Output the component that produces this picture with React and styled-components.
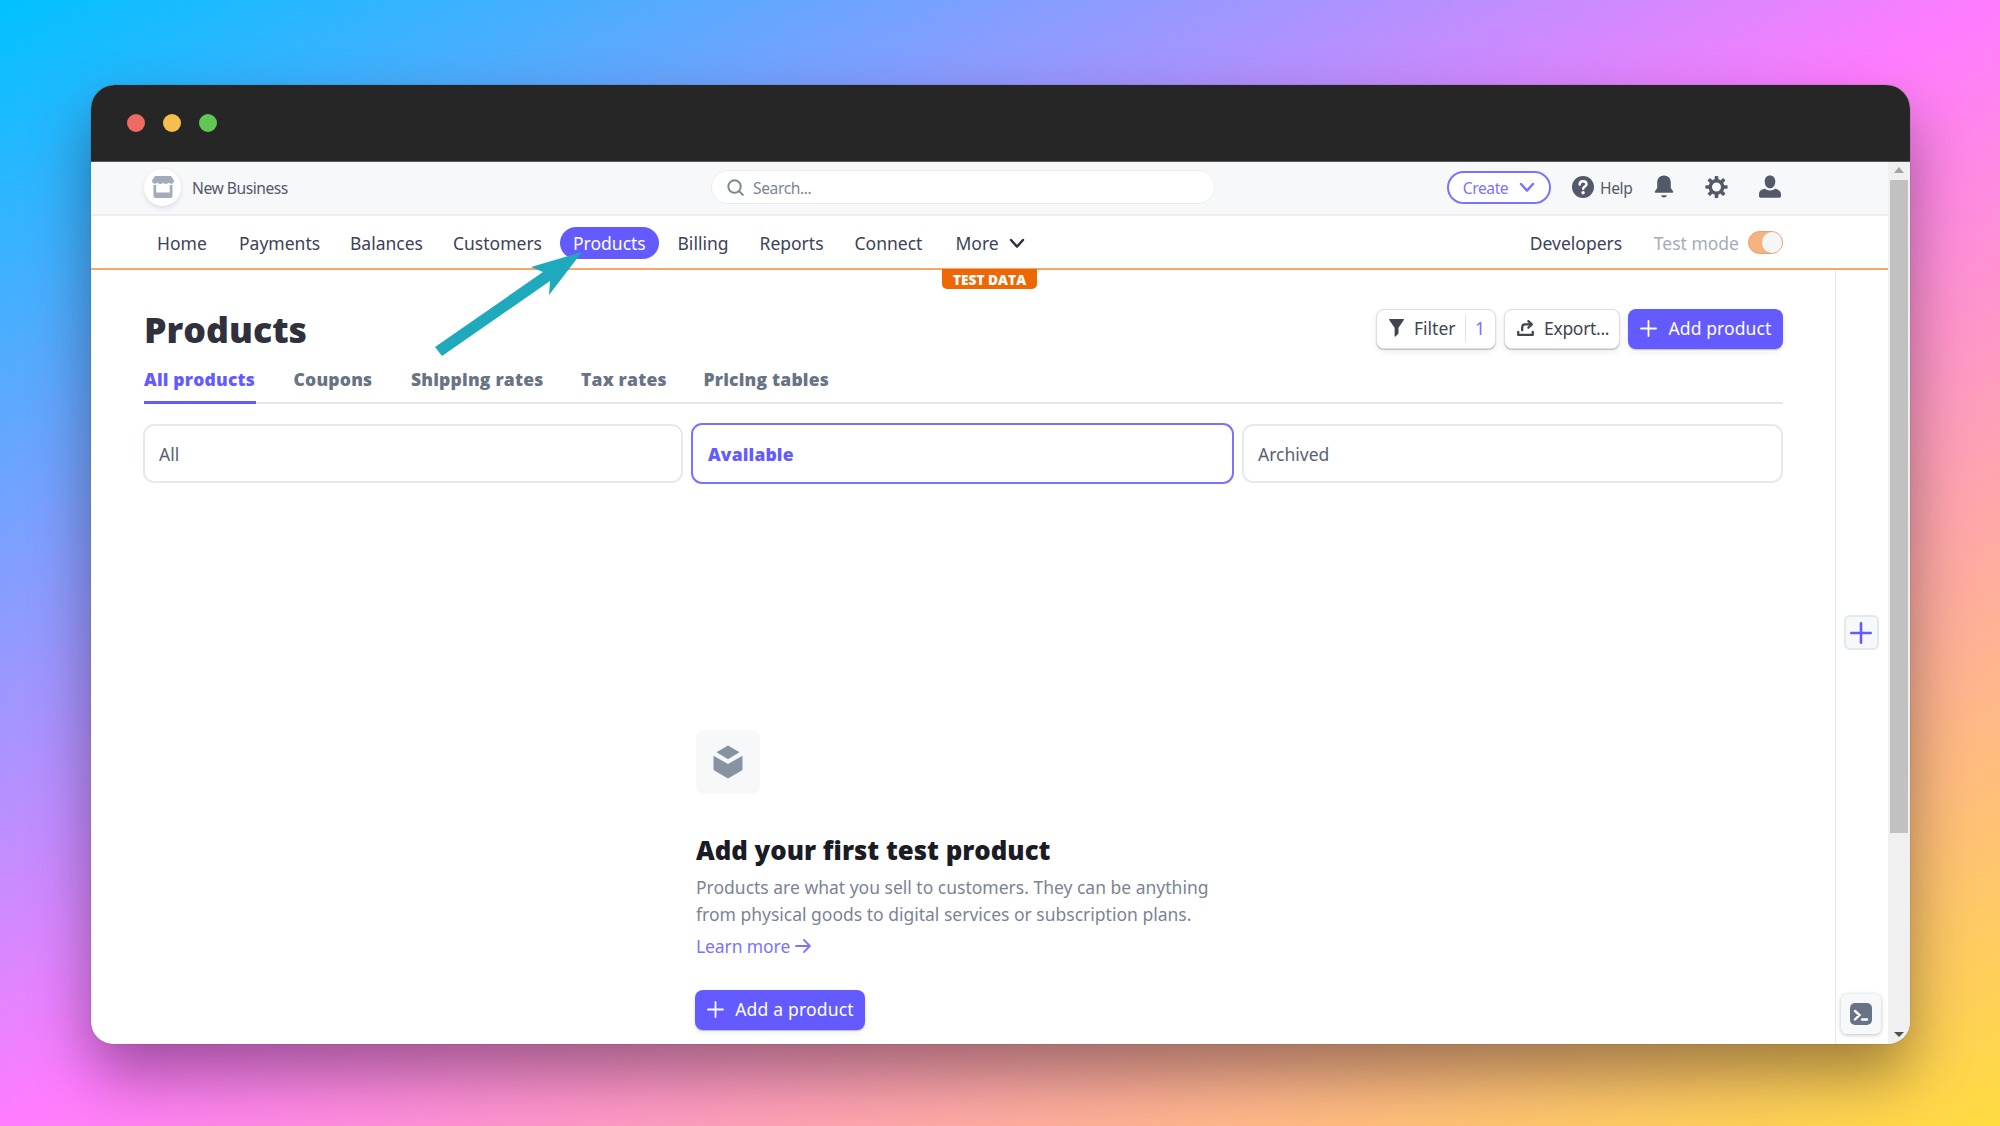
import React from "react";
import styled, { createGlobalStyle, css } from "styled-components";

const Global = createGlobalStyle`
  * { box-sizing: border-box; }
  body { margin: 0; }
`;

const heavy = css`
  font-family: "Open Sans", "Noto Sans", sans-serif;
  font-weight: 800;
`;

const Stage = styled.div`
  width: 2000px;
  height: 1126px;
  padding: 85px 90px 82px 91px;
  overflow: hidden;
  background: linear-gradient(to bottom right, #00c2ff 0%, #ff7cff 50%, #ffdc40 100%);
  font-family: "Noto Sans", "Open Sans", sans-serif;
  font-size: 17.5px;
  color: #3c4257;
  white-space: nowrap;
`;

const Window = styled.div`
  height: 959px;
  border-radius: 24px 24px 22px 22px;
  overflow: hidden;
  display: flex;
  flex-direction: column;
  background: #fff;
  box-shadow: 0 0 1px rgba(0, 0, 0, 0.6), 0 30px 60px rgba(0, 0, 0, 0.38);
`;

const TitleBar = styled.div`
  flex: none;
  height: 77px;
  padding: 0 35.5px;
  display: flex;
  align-items: center;
  gap: 18px;
  background: #262626;
  border-bottom: 1px solid #555;
`;

const Light = styled.span`
  width: 18px;
  height: 18px;
  border-radius: 50%;
  background: ${(p) => p.$color};
`;

const Viewport = styled.div`
  flex: 1;
  min-height: 0;
  display: flex;
`;

const Page = styled.div`
  flex: 1;
  display: flex;
  flex-direction: column;
`;

const Label = styled.span`
  display: inline-block;
  flex: none;
  width: ${(p) => p.$w}px;
  letter-spacing: ${(p) => (p.$ls === undefined ? "inherit" : `${p.$ls}px`)};
`;

const TopBar = styled.header`
  flex: none;
  height: 54px;
  padding: 0 107px 2px 53px;
  display: flex;
  align-items: center;
  background: #f6f8fa;
  border-bottom: 2px solid #ebeef2;
  font-size: 15.6px;
  letter-spacing: -0.4px;
  color: #545969;
`;

const Avatar = styled.span`
  width: 37px;
  height: 37px;
  margin-right: 11px;
  border-radius: 50%;
  display: grid;
  place-items: center;
  background: #fff;
  box-shadow: 0 2px 5px rgba(60, 66, 87, 0.14);
`;

const Caption = styled.span`
  padding-top: 2px;
`;

const Search = styled.div`
  width: 504px;
  height: 34px;
  margin-left: 422px;
  padding-left: 15px;
  border: 1px solid #ebeef1;
  border-radius: 17px;
  display: flex;
  align-items: center;
  gap: 9px;
  background: #fff;
  color: #7c8594;
`;

const CreateButton = styled.button`
  width: 104px;
  height: 33px;
  margin-left: 232px;
  padding: 0 0 0 13px;
  border: 2px solid #7a73ff;
  border-radius: 17px;
  display: flex;
  align-items: center;
  gap: 10px;
  background: #fff;
  color: #7a73ff;
  font: inherit;
  letter-spacing: inherit;
`;

const HelpLink = styled.span`
  margin-left: 21px;
  display: flex;
  align-items: center;
  gap: 6px;
  color: #545969;
`;

const IconRow = styled.div`
  margin-left: auto;
  display: flex;
  align-items: center;
  gap: 31px;
`;

const Nav = styled.nav`
  flex: none;
  height: 54px;
  padding: 2px 105px 0 66px;
  display: flex;
  align-items: center;
  border-bottom: 2px solid #f7a668;
  background: #fff;
`;

const NavItem = styled.a`
  height: 32px;
  line-height: 32px;
  margin-right: ${(p) => p.$gap}px;
  ${(p) =>
    p.$active &&
    css`
      padding: 0 13px;
      margin-left: -12px;
      border-radius: 16px;
      background: #635bff;
      color: #fff;
    `}
  ${(p) =>
    p.$muted &&
    css`
      color: #a3acba;
    `}
`;

const Spacer = styled.span`
  flex: 1;
`;

const Toggle = styled.span`
  width: 35px;
  height: 23px;
  margin: 0 0 1px 9px;
  border-radius: 12px;
  border: 1px solid #dfa378;
  display: flex;
  justify-content: flex-end;
  background: #f7b27f;

  &::after {
    content: "";
    width: 20px;
    height: 21px;
    border-radius: 50%;
    background: #f5f6f8;
  }
`;

const Columns = styled.div`
  flex: 1;
  min-height: 0;
  display: flex;
  position: relative;
`;

const TestData = styled.span`
  position: absolute;
  left: 851px;
  top: -1px;
  width: 95px;
  height: 20px;
  border-radius: 0 0 5px 5px;
  background: #ed6704;
  color: #fff;
  ${heavy}
  font-size: 13.7px;
  line-height: 21px;
  text-align: center;
`;

const Main = styled.main`
  width: 1745px;
  padding: 39px 52px 0 52px;
  display: flex;
  flex-direction: column;
  border-right: 1px solid #e3e7ec;
`;

const Heading = styled.div`
  height: 39px;
  display: flex;
  align-items: center;
`;

const Title = styled.h1`
  margin: 0 auto 0 1px;
  ${heavy}
  font-size: 35.7px;
  line-height: 40px;
  color: #30313d;
`;

const Button = styled.button`
  width: ${(p) => p.$w}px;
  height: 40px;
  margin-left: ${(p) => p.$ml ?? 8}px;
  padding: 0 0 1px 12px;
  border: ${(p) => (p.$primary ? "0" : "1px solid #dcdfe4")};
  border-radius: 8px;
  display: flex;
  align-items: center;
  gap: 10px;
  background: ${(p) => (p.$primary ? "#635bff" : "#fff")};
  color: ${(p) => (p.$primary ? "#fff" : "#414552")};
  box-shadow: 0 1px 1px rgba(0, 0, 0, 0.22), 0 3px 6px rgba(60, 66, 87, 0.09);
  font: inherit;
`;

const FilterCount = styled.span`
  height: 27px;
  padding-left: 9px;
  border-left: 1px solid #dfe3e8;
  line-height: 27px;
  color: #7a73ff;
`;

const Tabs = styled.div`
  height: 56px;
  margin: 0 0 0 1px;
  padding-top: 15px;
  display: flex;
  gap: 37.5px;
  border-bottom: 2px solid #e3e7ec;
  ${heavy}
  font-size: 17.5px;
  letter-spacing: 0.2px;
  color: #687385;
`;

const Tab = styled.a`
  height: 41px;
  line-height: 33px;
  ${(p) =>
    p.$active &&
    css`
      color: #635bff;
      border-bottom: 3px solid #635bff;
    `}
`;

const Segments = styled.div`
  margin-top: 19px;
  height: 61px;
  display: grid;
  grid-template-columns: 540px 543px 541px;
  gap: 8px;
  align-items: center;
`;

const Segment = styled.div`
  height: ${(p) => (p.$active ? 61 : 59)}px;
  padding: 0 14px;
  border: 2px solid ${(p) => (p.$active ? "#7a73ff" : "#e6eaef")};
  border-radius: 11px;
  display: flex;
  align-items: center;
  color: #596171;
  ${(p) =>
    p.$active &&
    css`
      ${heavy}
      padding-left: 15px;
      font-size: 17.5px;
      letter-spacing: 0.15px;
      color: #635bff;
    `}
`;

const Empty = styled.section`
  margin: 246px 0 0 553px;
  display: flex;
  flex-direction: column;
  align-items: flex-start;
  color: #7b8494;
`;

const IconTile = styled.span`
  width: 64px;
  height: 64px;
  border-radius: 8px;
  display: grid;
  place-items: center;
  background: #f6f8fa;
`;

const EmptyTitle = styled.h2`
  margin: 38px 0 0;
  ${heavy}
  font-size: 25.8px;
  line-height: 37px;
  color: #1a1b25;
`;

const Paragraph = styled.p`
  margin: 5px 0 0;
  line-height: 26.8px;
`;

const LearnMore = styled.a`
  margin: 5px 0 30px;
  height: 27px;
  display: flex;
  align-items: center;
  gap: 5px;
  color: #7a73ff;
`;

const Rail = styled.aside`
  flex: 1;
  padding: 345px 0 10px 2px;
  display: flex;
  flex-direction: column;
  justify-content: space-between;
  align-items: center;
`;

const RailButton = styled.span`
  width: ${(p) => p.$size}px;
  height: ${(p) => p.$size}px;
  margin-right: 4px;
  border-radius: 6px;
  display: grid;
  place-items: center;
  background: #f6f8fa;
  ${(p) =>
    p.$raised
      ? css`
          box-shadow: 0 1px 4px rgba(0, 0, 0, 0.25);
        `
      : css`
          border: 2px solid #e3e7ee;
        `}
`;

const ScrollTrack = styled.div`
  flex: none;
  width: 22px;
  padding: 0 2px;
  display: flex;
  flex-direction: column;
  align-items: center;
  background: #f0f0f0;
`;

const ScrollThumb = styled.div`
  width: 18px;
  height: 653px;
  margin: 5px 0 auto;
  background: #c1c1c1;
`;

const ArrowMark = styled.svg`
  position: absolute;
  left: 435px;
  top: 251px;
`;

const Chevron = ({ stroke, w = 2.4 }) => (
  <svg width="16" height="11" viewBox="0 0 16 11" fill="none" stroke={stroke} strokeWidth={w} strokeLinecap="round" strokeLinejoin="round">
    <path d="M2 2l6 6.600L14 2" />
  </svg>
);

const Plus = ({ color = "#fff", size = 17, w = 1.8 }) => (
  <svg width={size} height={size} viewBox="0 0 17 17" stroke={color} strokeWidth={w} strokeLinecap="round">
    <path d="M8.500 1v15M1 8.500h15" />
  </svg>
);

const NAV = [
  ["Home", 50, 32],
  ["Payments", 79, 32],
  ["Balances", 72, 31],
  ["Customers", 87, 32],
  ["Products", 73, 18.5, true],
  ["Billing", 50, 32],
  ["Reports", 63, 32],
  ["Connect", 68, 33],
  ["More", 44, 9],
];

const TABS = [
  ["All products", 112],
  ["Coupons", 80],
  ["Shipping rates", 132.5],
  ["Tax rates", 85],
  ["Pricing tables", 126],
];

export default function App() {
  return (
    <Stage>
      <Global />
      <Window>
        <TitleBar>
          <Light $color="#ed6b60" />
          <Light $color="#f5bf4f" />
          <Light $color="#62c655" />
        </TitleBar>
        <Viewport>
          <Page>
            <TopBar>
              <Avatar>
                <svg width="22" height="22" viewBox="0 0 22 22" fill="#a3acba">
                  <path d="M3 0h16l3 4.500c0 2.200-1.300 3.300-2.800 3.300S16.500 7 16.500 6.300C16.300 7.300 15 8 13.700 8S11 7.300 11 6.300C11 7.300 9.700 8 8.300 8S5.700 7.300 5.500 6.300C5.500 7 4.300 7.800 2.800 7.800S0 6.700 0 4.500z" />
                  <path d="M1.500 9h2.700v7.500h13.600V9h2.700v11c0 1.200-.8 2-2 2H3.500c-1.200 0-2-.8-2-2z" />
                </svg>
              </Avatar>
              <Caption>
                <Label $w={97} $ls={-0.45}>New Business</Label>
              </Caption>
              <Search>
                <svg width="17" height="17" viewBox="0 0 18 18" fill="none" stroke="#7c8594" strokeWidth="2.100" strokeLinecap="round">
                  <circle cx="8" cy="8" r="6.600" />
                  <path d="M12.800 12.800l4 4" />
                </svg>
                <Caption>Search...</Caption>
              </Search>
              <CreateButton>
                <Caption>
                  <Label $w={47}>Create</Label>
                </Caption>
                <Chevron stroke="#7a73ff" />
              </CreateButton>
              <HelpLink>
                <svg width="22" height="22" viewBox="0 0 22 22">
                  <circle cx="11" cy="11" r="11" fill="#545969" />
                  <path d="M7.700 8.400c0-2 1.500-3.200 3.400-3.200s3.400 1.200 3.400 3c0 2.300-3.300 2.400-3.300 4.600" fill="none" stroke="#fff" strokeWidth="2.500" strokeLinecap="round" />
                  <circle cx="11.100" cy="16.800" r="1.700" fill="#fff" />
                </svg>
                <Caption>Help</Caption>
              </HelpLink>
              <IconRow>
                <svg width="20" height="24" viewBox="0 0 20 24" fill="#545969">
                  <path d="M10 0.500c4.200 0 6.800 3 6.800 7v5.500L19 16.200c.5.800.1 1.600-.8 1.600H1.800c-.9 0-1.300-.8-.8-1.600l2.200-3.200V7.500c0-4 2.600-7 6.800-7zM7.200 20.200h5.600c-.2 1.300-1.400 2.300-2.800 2.300s-2.600-1-2.800-2.300z" />
                </svg>
                <svg width="23" height="24" viewBox="-12 -12 24 24">
                  <circle r="6.500" fill="none" stroke="#545969" strokeWidth="3.600" />
                  {[0, 45, 90, 135, 180, 225, 270, 315].map((a) => (
                    <rect key={a} x="-1.900" y="-11.600" width="3.800" height="4.500" rx="1" fill="#545969" transform={`rotate(${a})`} />
                  ))}
                </svg>
                <svg width="22" height="24" viewBox="0 0 22 24" fill="#545969">
                  <path d="M11 0.500c3.300 0 5.300 2.400 5.300 5.900s-2 6.800-5.300 6.800-5.300-3.300-5.300-6.800 2-5.900 5.300-5.900zM6 13.800c1.300 1 3 1.600 5 1.600s3.700-.6 5-1.600c3.500.5 6 2.600 6 5.400v1.800c0 1-.6 1.700-1.700 1.700H1.700C.6 22.700 0 22 0 21v-1.800c0-2.800 2.500-4.900 6-5.400z" />
                </svg>
              </IconRow>
            </TopBar>
            <Nav>
              {NAV.map(([text, w, gap, active]) => (
                <NavItem key={text} $gap={gap} $active={active}>
                  <Label $w={w}>{text}</Label>
                </NavItem>
              ))}
              <Chevron stroke="#30313d" />
              <Spacer />
              <NavItem $gap={32}>
                <Label $w={92}>Developers</Label>
              </NavItem>
              <NavItem $gap={0} $muted>
                Test mode
              </NavItem>
              <Toggle />
            </Nav>
            <Columns>
              <TestData>TEST DATA</TestData>
              <Main>
                <Heading>
                  <Title>Products</Title>
                  <Button $w={120}>
                    <svg width="15" height="18" viewBox="0 0 15 18" fill="#414552">
                      <path d="M.7 0h13.600c.6 0 .9.600.5 1.100L9.500 8.700V14.500L6.500 17.500c-.4.400-.9.200-.9-.4V8.700L.2 1.100C-.1.600.1 0 .7 0z" />
                    </svg>
                    <Label $w={41}>Filter</Label>
                    <FilterCount>1</FilterCount>
                  </Button>
                  <Button $w={116}>
                    <svg width="17" height="18" viewBox="0 0 18 18" fill="none" stroke="#414552" strokeWidth="2.400" strokeLinecap="round" strokeLinejoin="round">
                      <path d="M1.300 13v3.300h15.400V13M5.500 11.500V8.500c0-2 1-3.300 3-3.300h6" />
                      <path d="M12 1.700l3.700 3.500L12 8.700" />
                    </svg>
                    <Label $w={65} $ls={-0.3}>Export...</Label>
                  </Button>
                  <Button $w={155} $primary>
                    <Plus />
                    <Label $w={106} $ls={0.1}>Add product</Label>
                  </Button>
                </Heading>
                <Tabs>
                  {TABS.map(([text, w], i) => (
                    <Tab key={text} $active={i === 0}>
                      <Label $w={w}>{text}</Label>
                    </Tab>
                  ))}
                </Tabs>
                <Segments>
                  <Segment>All</Segment>
                  <Segment $active>Available</Segment>
                  <Segment>Archived</Segment>
                </Segments>
                <Empty>
                  <IconTile>
                    <svg width="30" height="34" viewBox="0 0 30 34" fill="#8792a2">
                      <path d="M15 0.500l11.500 6.800L15 14.200 3.500 7.300z" />
                      <path d="M0.500 10.700L15 19l14.500-8.300v13c0 .9-.4 1.600-1.200 2.100L15 33.500 1.700 25.800C.9 25.300.5 24.600.5 23.700z" />
                    </svg>
                  </IconTile>
                  <EmptyTitle>Add your first test product</EmptyTitle>
                  <Paragraph>
                    Products are what you sell to customers. They can be anything
                    <br />
                    from physical goods to digital services or subscription plans.
                  </Paragraph>
                  <LearnMore>
                    <Label $w={94} $ls={-0.1}>Learn more</Label>
                    <svg width="16" height="16" viewBox="0 0 17 17" fill="none" stroke="#7a73ff" strokeWidth="2" strokeLinecap="round" strokeLinejoin="round">
                      <path d="M1 8.500h14.500M9.500 2L15.800 8.500l-6.300 6.500" />
                    </svg>
                  </LearnMore>
                  <Button $w={170} $ml={-1} $primary>
                    <Plus />
                    <Label $w={121} $ls={0.2}>Add a product</Label>
                  </Button>
                </Empty>
              </Main>
              <Rail>
                <RailButton $size={35}>
                  <Plus color="#635bff" size={22} w={2} />
                </RailButton>
                <RailButton $size={40} $raised>
                  <svg width="22" height="22" viewBox="0 0 22 22" fill="none">
                    <rect width="22" height="22" rx="5" fill="#687385" />
                    <path d="M5 8l4.500 4L5 16.500M12 16.500h5" stroke="#fff" strokeWidth="2.400" strokeLinecap="round" />
                  </svg>
                </RailButton>
              </Rail>
            </Columns>
          </Page>
          <ScrollTrack>
            <svg width="10" height="13" viewBox="0 0 10 13" fill="#a3a3a3">
              <path d="M5 5l5 6H0z" />
            </svg>
            <ScrollThumb />
            <svg width="10" height="12" viewBox="0 0 10 12" fill="#505050">
              <path d="M0 0h10L5 5z" />
            </svg>
          </ScrollTrack>
        </Viewport>
      </Window>
      <ArrowMark width="150" height="108" viewBox="435 251 150 108" fill="#1eaabc">
        <path d="M582 252L549 295 550 281 442 356 435 347 543 272 531 267z" />
      </ArrowMark>
    </Stage>
  );
}
